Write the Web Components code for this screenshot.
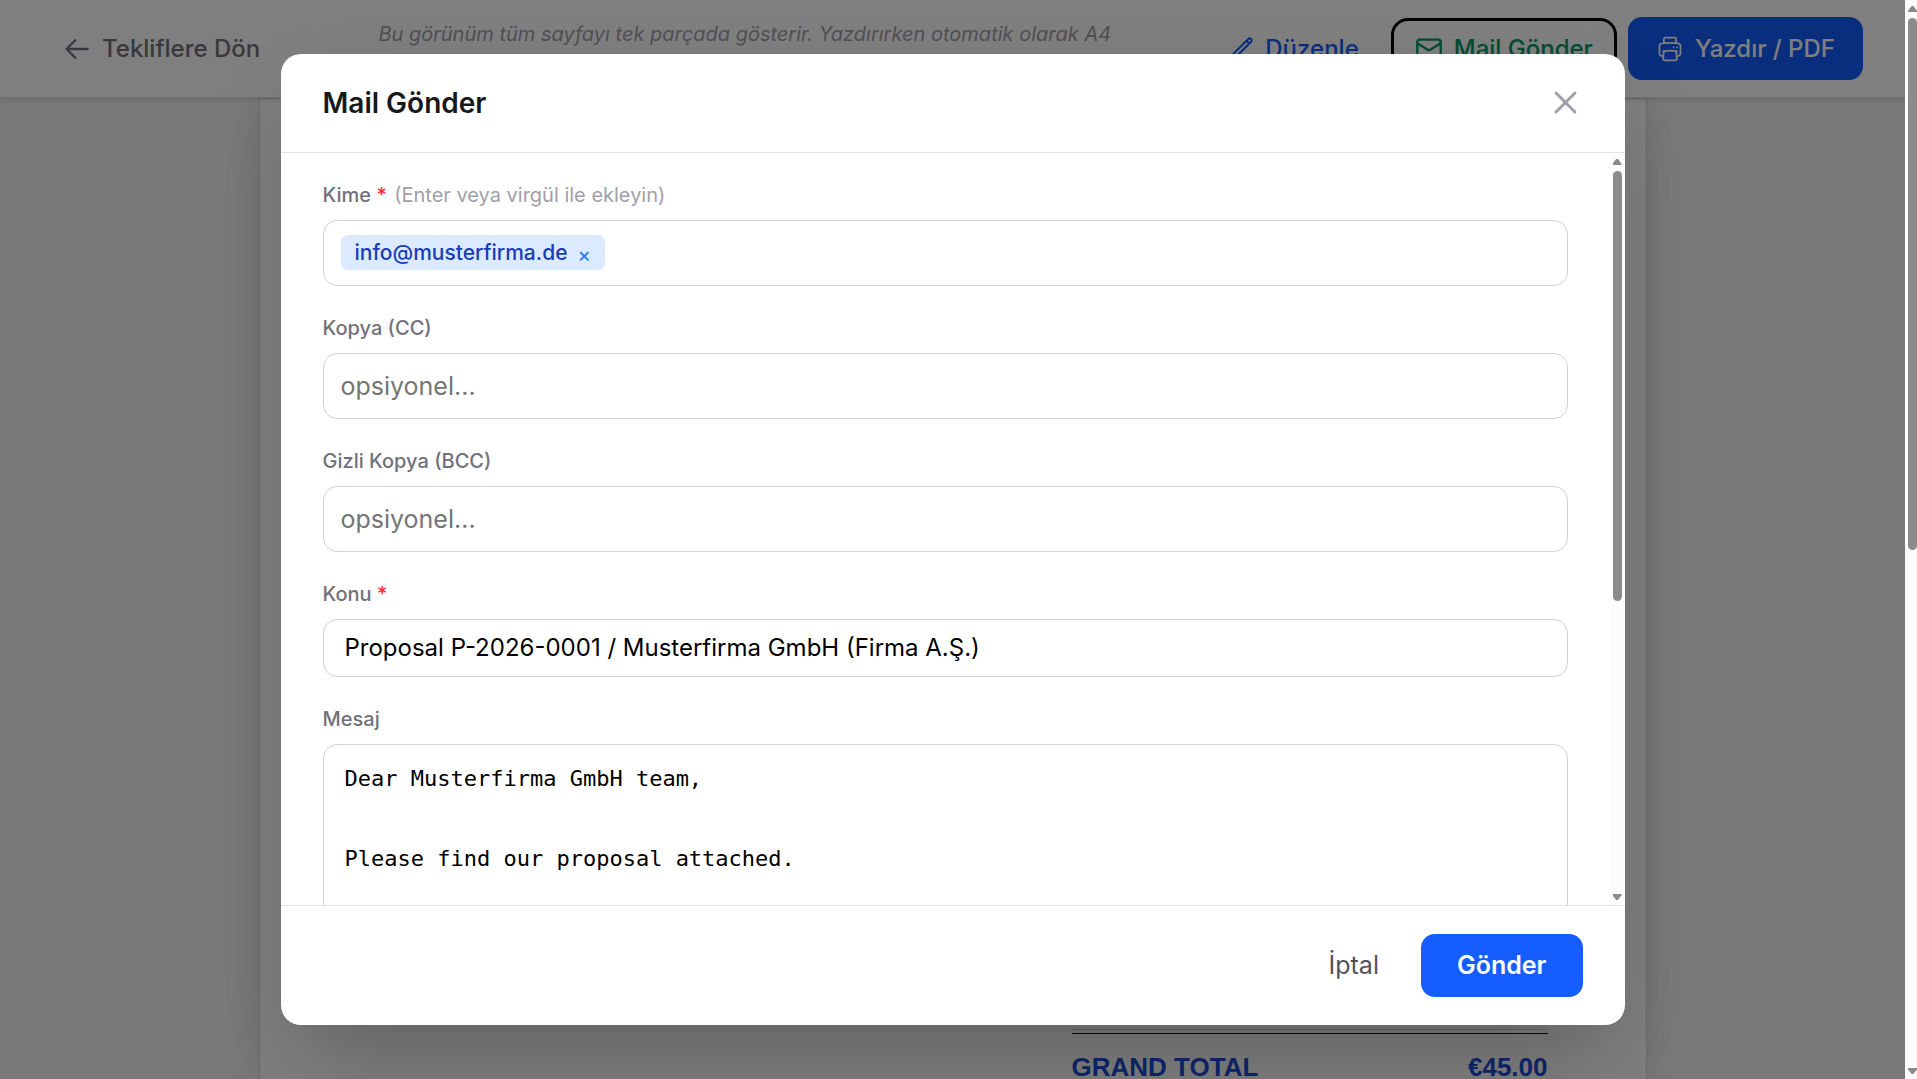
<!DOCTYPE html>
<html lang="tr">
<head>
<meta charset="utf-8">
<title>Mail Gönder</title>
<style>
  html, body { margin: 0; height: 100%; }
  body { font-family: Inter, "Noto Sans", sans-serif; font-size: 24px; line-height: 35px; color: #18181b; overflow: hidden; }
</style>
</head>
<body>
<app-shell>
  <proposal-toolbar slot="toolbar"></proposal-toolbar>
  <proposal-paper slot="paper" label="GRAND TOTAL" amount="€45.00"></proposal-paper>
  <modal-dialog slot="overlay" heading="Mail Gönder">
    <chip-field label="Kime" hint="(Enter veya virgül ile ekleyin)" chip="info@musterfirma.de" required></chip-field>
    <text-field label="Kopya (CC)" placeholder="opsiyonel..." tall></text-field>
    <text-field label="Gizli Kopya (BCC)" placeholder="opsiyonel..." tall></text-field>
    <text-field label="Konu" value="Proposal P-2026-0001 / Musterfirma GmbH (Firma A.Ş.)" required></text-field>
    <message-field label="Mesaj">Dear Musterfirma GmbH team,

Please find our proposal attached.</message-field>
    <ui-button slot="actions" variant="plain">İptal</ui-button>
    <ui-button slot="actions" variant="primary" strong>Gönder</ui-button>
  </modal-dialog>
</app-shell>

<script>
const esc = s => (s || '').replace(/&/g, '&amp;').replace(/"/g, '&quot;').replace(/</g, '&lt;');

class Base extends HTMLElement {
  connectedCallback() {
    if (!this.shadowRoot) this.attachShadow({ mode: 'open' }).innerHTML = this.render();
  }
  a(name) { return esc(this.getAttribute(name)); }
}

const ICONS = {
  back: '<path d="M10.5 19.5 3 12m0 0 7.5-7.5M3 12h18"/>',
  pencil: '<path d="m16.862 4.487 1.687-1.688a1.875 1.875 0 1 1 2.652 2.652L6.832 19.82a4.5 4.5 0 0 1-1.897 1.13l-2.685.8.8-2.685a4.5 4.5 0 0 1 1.13-1.897L16.863 4.487Zm0 0L19.5 7.125"/>',
  mail: '<rect x="2" y="4" width="20" height="16" rx="2"/><path d="m22 7-8.97 5.7a1.94 1.94 0 0 1-2.06 0L2 7"/>',
  print: '<path d="M6.72 13.829c-.24.03-.48.062-.72.096m.72-.096a42.415 42.415 0 0 1 10.56 0m-10.56 0L6.34 18m10.94-4.171c.24.03.48.062.72.096m-.72-.096L17.66 18m0 0 .229 2.523a1.125 1.125 0 0 1-1.12 1.227H7.231c-.662 0-1.18-.568-1.12-1.227L6.34 18m11.318 0h1.091A2.25 2.25 0 0 0 21 15.75V9.456c0-1.081-.768-2.015-1.837-2.175a48.055 48.055 0 0 0-1.913-.247M6.34 18H5.25A2.25 2.25 0 0 1 3 15.75V9.456c0-1.081.768-2.015 1.837-2.175a48.041 48.041 0 0 1 1.913-.247m10.5 0a48.536 48.536 0 0 0-10.5 0m10.5 0V3.375c0-.621-.504-1.125-1.125-1.125h-8.25c-.621 0-1.125.504-1.125 1.125v3.659M18 10.5h.008v.008H18V10.5Zm-3 0h.008v.008H15V10.5Z"/>',
  close: '<path d="M5.5 5.5l13 13M18.5 5.5l-13 13"/>'
};

customElements.define('ui-icon', class extends Base {
  render() {
    return `<style>
      :host { display: block; width: 28px; height: 28px; flex: none; }
      :host([name=pencil]) { width: 25px; height: 25px; }
      :host([name=close]) { width: 35px; height: 35px; }
      svg { display: block; width: 100%; height: 100%; }
    </style>
    <svg viewBox="0 0 24 24" fill="none" stroke="currentColor" stroke-width="${this.a('weight') || '2'}" stroke-linecap="round" stroke-linejoin="round" aria-hidden="true">${ICONS[this.getAttribute('name')]}</svg>`;
  }
});

customElements.define('ui-button', class extends Base {
  render() {
    return `<style>
      :host { display: block; }
      button { display: flex; align-items: center; gap: 11px; margin: 0; border: 0; border-radius: 14px; background: none;
        padding: 14px 21px; font: inherit; font-weight: 500; line-height: 35px; color: #155dfc; white-space: nowrap; cursor: pointer; }
      :host([variant=plain]) button { color: #52525c; font-size: 25px; font-weight: 400; }
      :host([variant=success]) button { color: #009966; padding: 10px 21px; outline: 3px solid #000; }
      :host([variant=primary]) button { background: #155dfc; color: #fff; padding: 14px 28px; }
      :host([strong]) button { font-size: 25px; font-weight: 600; padding: 14px 36px; }
    </style>
    <button type="button"><slot name="icon"></slot><slot></slot></button>`;
  }
});

customElements.define('scroll-rail', class extends Base {
  render() {
    return `<style>
      :host { display: flex; flex-direction: column; gap: 6px; box-sizing: border-box; width: 15px; padding: 6px 3px 5px; background: #fcfcfc; }
      i { display: block; height: 6px; background: #8b8b8b; flex: none; }
      .up { clip-path: polygon(40% 0, 60% 0, 100% 80%, 100% 100%, 0 100%, 0 80%); }
      .down { clip-path: polygon(0 0, 100% 0, 100% 20%, 60% 100%, 40% 100%, 0 20%); }
      .track { flex: 1; min-height: 0; }
      .thumb { height: var(--thumb, 60%); border-radius: 5px; background: #8b8b8b; }
    </style>
    <i class="up"></i><div class="track"><div class="thumb"></div></div><i class="down"></i>`;
  }
});

customElements.define('app-shell', class extends Base {
  render() {
    return `<style>
      :host { display: flex; height: 100vh; overflow: hidden; }
      .page { position: relative; flex: 1; min-width: 0; display: flex; flex-direction: column; background: #f4f4f5; overflow: hidden; }
      scroll-rail { --thumb: 51%; width: 12px; padding-right: 0; }
    </style>
    <div class="page">
      <slot name="toolbar"></slot>
      <slot name="paper"></slot>
      <slot name="overlay"></slot>
    </div>
    <scroll-rail></scroll-rail>`;
  }
});

customElements.define('proposal-toolbar', class extends Base {
  render() {
    return `<style>
      :host { display: flex; align-items: center; justify-content: space-between; gap: 28px; box-sizing: border-box; min-height: 98px; padding: 17px 42px;
        background: #fff; border-bottom: 1px solid #e4e4e7; box-shadow: 0 2px 5px rgba(0,0,0,.12); z-index: 1; }
      a { display: flex; align-items: center; gap: 11px; padding: 14px 21px; color: #71717b; font-weight: 500; text-decoration: none; white-space: nowrap; }
      p { margin: 0; min-height: 58px; font-size: 20px; line-height: 29px; font-style: italic; color: #9f9fa9; }
      nav { display: flex; align-items: center; gap: 14px; }
    </style>
    <a href="#"><ui-icon name="back"></ui-icon>Tekliflere Dön</a>
    <p>Bu görünüm tüm sayfayı tek parçada gösterir. Yazdırırken otomatik olarak A4</p>
    <nav>
      <ui-button><ui-icon slot="icon" name="pencil"></ui-icon>Düzenle</ui-button>
      <ui-button variant="success"><ui-icon slot="icon" name="mail"></ui-icon>Mail Gönder</ui-button>
      <ui-button variant="primary"><ui-icon slot="icon" name="print" weight="1.5"></ui-icon>Yazdır / PDF</ui-button>
    </nav>`;
  }
});

customElements.define('proposal-paper', class extends Base {
  render() {
    return `<style>
      :host { flex: 1; min-height: 0; display: flex; flex-direction: column; justify-content: flex-end; align-items: flex-end; box-sizing: border-box;
        width: 100%; max-width: 1388px; margin: 0 auto; padding: 0 98px; background: #fff; border: 1px solid #d4d4d8; border-width: 1px 1px 0;
        box-shadow: 0 0 36px rgba(0,0,0,.1); }
      dl { display: flex; justify-content: space-between; box-sizing: border-box; width: 40%; min-width: 476px; margin: 3px 0 0; padding-top: 21px; border-top: 1px solid #18181b;
        font: bold 26px/24px "Liberation Sans", Arial, sans-serif; color: #1d4ed8; }
      hr { width: 40%; min-width: 476px; margin: 0; border: 0; border-top: 1px solid #d4d4d8; }
      dt, dd { margin: 0; }
    </style>
    <hr><dl><dt>${this.a('label')}</dt><dd>${this.a('amount')}</dd></dl>`;
  }
});

customElements.define('modal-dialog', class extends Base {
  render() {
    return `<style>
      :host { position: absolute; inset: 0; z-index: 2; display: flex; align-items: center; justify-content: center; background: rgba(0,0,0,.5); }
      section { display: flex; flex-direction: column; box-sizing: border-box; width: 100%; max-width: 1344px; max-height: 90%; border-radius: 20px; background: #fff;
        overflow: hidden; box-shadow: 0 44px 88px -21px rgba(0,0,0,.25); }
      header { display: flex; align-items: center; justify-content: space-between; padding: 28px 42px; border-bottom: 1px solid #e4e4e7; }
      h2 { margin: 0; font-size: 28px; line-height: 42px; font-weight: 600; }
      header button { display: flex; margin: 0; padding: 0; border: 0; background: none; color: #9f9fa9; cursor: pointer; }
      .body { flex: 1; min-height: 0; display: flex; }
      form { flex: 1; min-width: 0; display: flex; flex-direction: column; gap: 28px; padding: 28px 42px; overflow: hidden; }
      footer { display: flex; align-items: center; justify-content: flex-end; gap: 21px; padding: 28px 42px; border-top: 1px solid #e4e4e7; }
    </style>
    <section role="dialog" aria-modal="true" aria-labelledby="heading">
      <header><h2 id="heading">${this.a('heading')}</h2><button type="button" aria-label="Kapat"><ui-icon name="close"></ui-icon></button></header>
      <div class="body"><form><slot></slot></form><scroll-rail></scroll-rail></div>
      <footer><slot name="actions"></slot></footer>
    </section>`;
  }
});

const FIELD_CSS = `
  :host { display: flex; flex-direction: column; gap: 11px; flex: none; }
  label { font-size: 20px; line-height: 28px; font-weight: 500; color: #71717b; }
  label b { font-weight: 500; color: #fb2c36; }
  label span { margin-left: 2px; font-weight: 400; color: #9f9fa9; }
  .box, input, textarea { box-sizing: border-box; width: 100%; margin: 0; border: 1px solid #d1d1d6; border-radius: 14px; background: #fff; outline: 0; }
  input { height: 58px; padding: 0 21px; font: inherit; color: #000; }
  input::placeholder { color: #757575; opacity: 1; }
`;

customElements.define('text-field', class extends Base {
  render() {
    return `<style>${FIELD_CSS}
      :host([tall]) input { height: 66px; padding: 0 17px; font-size: 25px; }
    </style>
    <label for="f">${this.a('label')}${this.hasAttribute('required') ? ' <b>*</b>' : ''}</label>
    <input id="f" type="text" value="${this.a('value')}" placeholder="${this.a('placeholder')}">`;
  }
});

customElements.define('chip-field', class extends Base {
  render() {
    return `<style>${FIELD_CSS}
      .box { display: flex; align-items: center; gap: 10px; height: 66px; padding: 0 17px; }
      .chip { display: flex; align-items: center; gap: 10px; padding: 0 14px; border-radius: 7px; background: #dbeafe; color: #193cb8; font-size: 21px; line-height: 35px; font-weight: 500; }
      .chip button { margin: 0; padding: 4px 0 0; border: 0; background: none; color: #2b7fff; font: inherit; font-size: 20px; line-height: 28px; cursor: pointer; }
      .box input { flex: 1; width: auto; min-width: 0; height: 42px; padding: 0; border: 0; }
    </style>
    <label for="f">${this.a('label')} <b>*</b> <span>${this.a('hint')}</span></label>
    <div class="box"><span class="chip">${this.a('chip')}<button type="button" aria-label="Kaldır">×</button></span><input id="f" type="text"></div>`;
  }
});

customElements.define('message-field', class extends Base {
  render() {
    return `<style>${FIELD_CSS}
      textarea { display: block; height: 420px; padding: 14px 21px; resize: none; overflow: hidden; color: #000; font: 22px/40px "DejaVu Sans Mono", monospace; }
    </style>
    <label for="f">${this.a('label')}</label>
    <textarea id="f">${esc(this.textContent)}</textarea>`;
  }
});
</script>
</body>
</html>
